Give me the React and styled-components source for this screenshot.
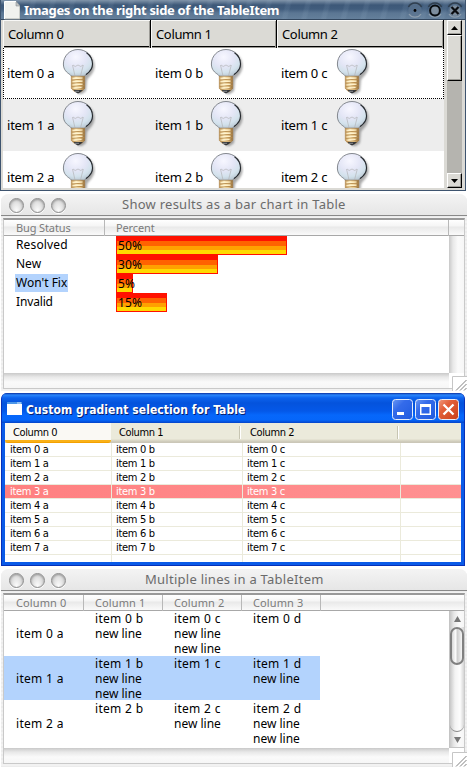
import React from 'react';
import styled, { createGlobalStyle } from 'styled-components';

const Global = createGlobalStyle`
  * { box-sizing: border-box; }
  body { margin: 0; background: #fff; overflow: hidden; }
`;

const Page = styled.main`
  width: 467px;
  height: 767px;
  overflow: hidden;
  display: flex;
  flex-direction: column;
  color: #000;
  white-space: nowrap;
  font-family: 'Noto Sans', sans-serif;
`;

/* ---------- GTK window ---------- */

const GtkWindow = styled.section`
  width: 466px;
  height: 191px;
  flex: none;
  display: flex;
  flex-direction: column;
  border: solid #3e546f;
  border-width: 0 1px 1px;
  background: #dbdad5;
`;

const GtkTitle = styled.header`
  height: 20px;
  flex: none;
  display: flex;
  align-items: center;
  padding: 0 2px 0 3px;
  color: #fff;
  border-bottom: 1px solid #33475f;
  background:
    repeating-linear-gradient(105deg, transparent 0 9px, rgba(160, 185, 210, 0.1) 11px 14px, transparent 16px 19px),
    linear-gradient(#8195aa 0, #3d5878 5px, #405c7c 9px, #5b7693 13px, #647f9b 100%);
`;

const GtkCaption = styled.h1`
  flex: 1;
  margin: 0;
  padding-left: 4px;
  font: bold 13px/20px 'Noto Sans', sans-serif;
  letter-spacing: -0.33px;
`;

const GtkButtons = styled.div`
  display: flex;
  gap: 4px;
`;

const GtkMain = styled.div`
  flex: 1;
  min-height: 0;
  display: flex;
  padding: 0 3px 2px 2px;
`;

const GtkTable = styled.div`
  width: 441px;
  margin-right: 3px;
  overflow: hidden;
  background: #fff;
`;

const gtkColumns = '148px 126px 167px';

const GtkHeader = styled.div`
  height: 27px;
  display: grid;
  grid-template-columns: ${gtkColumns};
  border-bottom: 1px solid #000;
  background: #dbdad5;
`;

const GtkHeaderCell = styled.div`
  padding-left: 5px;
  font-size: 13px;
  line-height: 28px;
  letter-spacing: -0.35px;
  border-right: 1px solid #000;
  box-shadow: inset 1px 1px #f8f8f6, inset -1px -1px #9c9b96;
`;

const GtkRow = styled.div`
  height: 52px;
  display: grid;
  grid-template-columns: ${gtkColumns};
  border: 1px ${p => (p.$focused ? 'dotted #000' : 'solid transparent')};
  background: ${p => (p.$shaded ? '#ededed' : '#fff')};
`;

const GtkCell = styled.div`
  display: flex;
  font-size: 13px;
  line-height: 51px;
  padding-left: 3px;
`;

const GtkLabel = styled.span`
  width: 55px;
  letter-spacing: -0.22px;
`;

const GtkScroll = styled.div`
  width: 15px;
  display: flex;
  flex-direction: column;
  background: #b5b4af;
`;

const GtkRaised = styled.div`
  height: ${p => p.$h}px;
  display: grid;
  place-items: center;
  background: #dbdad5;
  border: solid;
  border-width: 1px;
  border-color: #fff #000 #000 #fff;
  box-shadow: inset -1px -1px #a09f9a;
`;

const Spacer = styled.div`
  flex: 1;
`;

const BulbSvg = styled.svg`
  width: 34px;
  height: 48px;
  flex: none;
`;

const Bulb = () => (
  <BulbSvg viewBox="0 0 34 48">
    <defs>
      <radialGradient id="glass" cx="42%" cy="28%" r="72%">
        <stop offset="0" stopColor="#f7f7ff" />
        <stop offset=".5" stopColor="#e4e6f6" />
        <stop offset=".8" stopColor="#d3e2ec" />
        <stop offset="1" stopColor="#bdcbd6" />
      </radialGradient>
      <linearGradient id="brass">
        <stop offset="0" stopColor="#c79d5e" />
        <stop offset=".35" stopColor="#fff0c4" />
        <stop offset=".65" stopColor="#ecca8c" />
        <stop offset="1" stopColor="#8a6531" />
      </linearGradient>
      <filter id="soft" x="-20%" y="-20%" width="150%" height="150%">
        <feGaussianBlur stdDeviation="1.1" />
      </filter>
    </defs>
    <path d="M18 3.500a14.500 14.500 0 0 1 14.500 14.500c0 7-5 10-7.500 14l-1 11-4 3h-4V4z" fill="#555" opacity=".5" filter="url(#soft)" />
    <path d="M16 1.500C7.700 1.500 1.400 8 1.400 16c0 6 3.600 8.500 6.400 10.500 1 .7 1.400 1.200 1.400 1.800h13.400c0-.6.5-1.100 1.500-1.800 3-2 6.500-4.500 6.500-10.500C30.600 8 24.300 1.500 16 1.500z" fill="url(#glass)" stroke="#777c82" strokeWidth=".9" />
    <path d="M24.500 4.700c3.800 2.600 6 6.700 6 11.300 0 6-3.600 8.500-6.400 10.500" fill="none" stroke="#25292d" strokeWidth="1.100" />
    <path d="M13 28L10.500 17M18.500 28l2.800-11M11 17l2.200 1.500 2.800-1.500 2.800 1.500 2.200-1.500" fill="none" stroke="#b3b4b8" strokeWidth=".7" />
    <path d="M9.300 28.300h13.400v12l-2.700 3h-8l-2.700-3z" fill="url(#brass)" stroke="#a98047" strokeWidth=".6" />
    <path d="M9.500 32l13-1M9.500 35.200l13-1M9.500 38.400l13-1M10.500 41.500l11-1" stroke="#b58a4c" strokeWidth=".9" />
    <path d="M10.500 30.700l10-.7M10.500 33.800l10-.7M10.500 37l10-.7M11.500 40.200l8-.7" stroke="#fff3cf" strokeWidth="1.100" />
    <path d="M11.500 42h9.500l-2.500 2.200-2.500 1.300-2.500-1.300z" fill="#35373a" />
    <path d="M13 43.300h4" stroke="#9da0a3" strokeWidth=".8" />
  </BulbSvg>
);

const Glyph = styled.svg`
  display: block;
  flex: none;
`;

const PageIcon = () => (
  <Glyph width="16" height="20" viewBox="0 0 16 20">
    <path d="M.5 1.500h11.500l4 4v13.500H.5z" fill="#f1f1ee" />
    <path d="M12 1.500v4.500h4z" fill="#c4c5c3" stroke="#777e85" strokeWidth=".5" />
    <path d="M.5 19h15.500V6" fill="none" stroke="#a6aaa9" />
    <path d="M.5 19V1.500H12" fill="none" stroke="#fff" />
  </Glyph>
);

const GtkButton = ({ kind }) => (
  <Glyph width="16" height="17" viewBox="0 0 16 17">
    <circle cx="8" cy="9" r="6.800" fill="#5d7590" opacity=".7" />
    <path d="M1.500 6a7.200 7.200 0 0 1 13 0" fill="none" stroke="#2f3e4e" strokeWidth="1.500" />
    <path d="M2 13a7.200 7.200 0 0 0 12 0" fill="none" stroke="#8d9dad" strokeWidth="1.300" />
    {kind === 'min' && <circle cx="8" cy="9.500" r="1.400" fill="#000" />}
    {kind === 'max' && <circle cx="8" cy="9.500" r="4.900" fill="#7d8d9d" stroke="#080b0e" strokeWidth="2" />}
    {kind === 'close' && (
      <>
        <circle cx="8" cy="9.500" r="5.300" fill="#7d8d9d" />
        <path d="M4.500 6l7 7M11.500 6l-7 7" stroke="#0a0c10" strokeWidth="2.200" />
      </>
    )}
  </Glyph>
);

const Arrow = ({ down, width = 7, height = 4, color = '#000' }) => (
  <Glyph width={width} height={height} viewBox="0 0 8 4" preserveAspectRatio="none">
    <path d={down ? 'M0 0h8L4 4z' : 'M0 4h8L4 0z'} fill={color} />
  </Glyph>
);

/* ---------- Aqua windows ---------- */

const MacWindow = styled.section`
  width: 466px;
  height: ${p => p.$h}px;
  margin: 3px 0 0 1px;
  flex: none;
  position: relative;
  border-radius: 7px 7px 0 0;
  border-top: 1px solid #f3f3f3;
  background: repeating-linear-gradient(#ececec 0 2px, #f2f2f2 2px 4px);
  overflow: hidden;
`;

const MacTitle = styled.header`
  height: 21px;
  display: flex;
  align-items: center;
  padding-left: 8px;
  border-bottom: 1px solid #898989;
  background: linear-gradient(#f3f3f3, #e6e6e6);
`;

const Lights = styled.div`
  display: flex;
  gap: 6px;
`;

const Light = styled.i`
  width: 15px;
  height: 15px;
  border-radius: 50%;
  border: 1px solid #8c8c8c;
  background: radial-gradient(ellipse at 50% 100%, #fff 0, #e6e6e6 45%, #c2c2c2 100%);
  box-shadow: inset 0 1px 2px #999, 0 1px #fff;
`;

const MacCaption = styled.h1`
  margin: -2px 0 0 ${p => p.$left}px;
  font: 400 13px/20px 'Noto Sans', sans-serif;
  letter-spacing: 0.26px;
  color: #6b6b6b;
`;

const MacFrame = styled.div`
  margin: 2px 0 0 2px;
  width: 462px;
  border: 1px solid #c9c9c9;
  border-top: 2px solid #999;
  background: #fff;
`;

const MacHeader = styled.div`
  height: 16px;
  display: grid;
  grid-template-columns: ${p => p.$columns};
  border-bottom: 1px solid #a8a8a8;
  background: linear-gradient(#fff 0, #f5f5f5 6px, #e9e9e9 7px, #fafafa 15px);
`;

const MacHeaderCell = styled.div`
  padding-left: ${p => (p.$wide ? 11 : 12)}px;
  border-right: ${p => (p.$last ? 0 : 1)}px solid #b8b8b8;
  font-size: 11px;
  line-height: 16px;
  letter-spacing: ${p => (p.$tight ? -0.12 : 0.1)}px;
  color: #7b7b7b;
`;

const MacContent = styled.div`
  display: flex;
  height: 137px;
`;

const MacRows = styled.div`
  width: 445px;
  overflow: hidden;
`;

const MacTrack = styled.div`
  width: 15px;
  background: linear-gradient(90deg, #c8c8c8, #e8e8e8 4px, #fafafa 9px, #f6f6f6);
`;

const MacHTrack = styled.div`
  height: 15px;
  width: 445px;
  background: linear-gradient(#c9c9c9, #e8e8e8 4px, #fafafa 9px, #f6f6f6);
`;

const Grip = styled.svg`
  position: absolute;
  right: 0;
  bottom: 0;
  width: 15px;
  height: 15px;
`;

const ResizeGrip = () => (
  <Grip viewBox="0 0 15 15">
    <path d="M0 0h15v15H0z" fill="#fff" />
    <path d="M.5 15V.5H15" fill="none" stroke="#c6c6c6" />
    <path d="M4 14.500L14.500 4M8 14.500L14.500 8M12 14.500l2.500-2.500" stroke="#808080" />
  </Grip>
);

const BugRow = styled.div`
  height: 19px;
  display: flex;
`;

const BugName = styled.div`
  width: 112px;
  padding-left: 11px;
  display: flex;
  align-items: flex-start;
`;

const BugLabel = styled.span`
  height: 18px;
  padding: 0 1px;
  font-size: 12px;
  line-height: 18px;
  letter-spacing: ${p => p.$track}px;
  background: ${p => (p.$selected ? '#b3d3fd' : 'transparent')};
`;

const Bar = styled.div`
  height: 19px;
  padding-left: 2px;
  font-size: 12px;
  line-height: 19px;
  letter-spacing: 0.1px;
  border: solid #f10;
  border-width: 0 0 1px;
  box-shadow: inset 1px 0 #f10, inset -1px 0 #f10;
  background: linear-gradient(#f10 0 5px, #ff6200 5px 10px, #ffa100 10px 14px, #ffd900 14px);
`;

const MultiRow = styled.div`
  width: ${p => (p.$selected ? 316 : 445)}px;
  height: ${p => (p.$selected ? 44 : 45)}px;
  margin-bottom: ${p => (p.$selected ? 1 : 0)}px;
  display: grid;
  grid-template-columns: 79px 79px 79px 79px;
  background: ${p => (p.$selected ? '#b3d3fd' : '#fff')};
`;

const MultiCell = styled.div`
  display: flex;
  flex-direction: column;
  justify-content: ${p => (p.$middle ? 'center' : 'flex-start')};
  height: 45px;
  padding-left: 12px;
  font-size: 12px;
  line-height: 15px;
`;

const Line = styled.span`
  letter-spacing: ${p => (p.$item ? 0.3 : 0)}px;
`;

const AquaScroll = styled(MacTrack)`
  display: flex;
  flex-direction: column;
  align-items: center;
  border: 1px solid #c4c4c4;
  border-width: 0 0 1px 1px;
  padding: 5px 0 4px;
`;

const AquaTrough = styled.div`
  width: 14px;
  height: 105px;
  margin: 5px 0 5px;
  flex: none;
  border-radius: 0 0 7px 7px;
  border-bottom: 1px solid #888;
  background: linear-gradient(90deg, #c8c8c8, #f3f3f3 5px, #fdfdfd 10px, #d5d5d5);
`;

const AquaThumb = styled.div`
  width: 14px;
  height: 38px;
  border-radius: 7px;
  border: 2px solid #808080;
  background: linear-gradient(90deg, #d8d8d8, #fff 4px, #ccc 5px, #f4f4f4 10px);
`;

/* ---------- XP window ---------- */

const XpWindow = styled.section`
  width: 464px;
  height: 173px;
  margin: 2px 0 0 1px;
  flex: none;
  border-radius: 6px 6px 0 0;
  border: solid #0831b8;
  border-width: 0 1px 1px;
  overflow: hidden;
  background: #0a5be8;
  font-family: 'DejaVu Sans Condensed', 'DejaVu Sans', sans-serif;
`;

const XpTitle = styled.header`
  height: 30px;
  display: flex;
  align-items: center;
  padding: 2px 5px 0 5px;
  color: #fff;
  background: linear-gradient(#0a2fa0 0, #2a86fb 2px, #0c62ec 5px, #0453dc 10px, #0458e8 18px, #0667fb 22px, #0566fa 27px, #0544c8 30px);
`;

const XpCaption = styled.h1`
  flex: 1;
  margin: 2px 0 0;
  padding-left: 4px;
  font: bold 12px/20px 'DejaVu Sans Condensed', 'DejaVu Sans', sans-serif;
  letter-spacing: 0.06px;
  text-shadow: 1px 1px #062070;
`;

const XpButtons = styled.div`
  display: flex;
  gap: 2px;
`;

const XpBody = styled.div`
  height: 139px;
  margin: 0 3px;
  overflow: hidden;
  background: #fff;
`;

const XpHeader = styled.div`
  height: 20px;
  display: grid;
  grid-template-columns: 106px 130px 158px 62px;
  background: linear-gradient(#ebeadb 16px, #dddac9 17px, #cbc7b8 19px);
`;

const XpHeaderCell = styled.div`
  height: 20px;
  padding-left: ${p => p.$indent || 8}px;
  font-size: 11px;
  line-height: 20px;
  letter-spacing: -0.4px;
  color: #000;
  background: ${p =>
    p.$hot
      ? 'linear-gradient(#faf9f4 17px, #f9b119 17px 19px, #f4a100 19px)'
      : p.$divided
        ? 'linear-gradient(#c7c5b2, #c7c5b2) right 1px top 3px / 1px 13px no-repeat, linear-gradient(#fff, #fff) right 0 top 3px / 1px 13px no-repeat'
        : 'none'};
  border-radius: ${p => (p.$hot ? '0 0 3px 3px' : 0)};
`;

const XpRow = styled.div`
  height: 14px;
  display: grid;
  grid-template-columns: 107px 131px 158px 60px;
  color: ${p => (p.$selected ? '#fff' : '#000')};
  background: ${p => (p.$selected ? 'linear-gradient(90deg, #ff8080, #ff9191)' : '#fff')};
  border-bottom: 1px solid #ebeadb;
`;

const XpCell = styled.div`
  padding-left: ${p => (p.$first ? 5 : 4)}px;
  font-size: 11px;
  line-height: 14px;
  letter-spacing: -0.32px;
  border-right: ${p => (p.$last ? 0 : 1)}px solid #ebeadb;
`;

const XpAppIcon = () => (
  <Glyph width="15" height="14" viewBox="0 0 15 14">
    <path d="M0 0h15v13H0z" fill="#fff" />
    <path d="M0 0h15v2H0z" fill="#4c96e8" />
    <path d="M10 .500h4v1h-4z" fill="#d6e7fa" />
  </Glyph>
);

const XpButton = ({ kind }) => (
  <Glyph width="21" height="21" viewBox="0 0 21 21">
    <defs>
      <linearGradient id={`xp-${kind}`} x2="1" y2="1">
        <stop offset="0" stopColor={kind === 'close' ? '#f09a7e' : '#6c98f2'} />
        <stop offset=".35" stopColor={kind === 'close' ? '#e3603a' : '#346bea'} />
        <stop offset="1" stopColor={kind === 'close' ? '#c8401a' : '#1f5adf'} />
      </linearGradient>
    </defs>
    <rect x=".5" y=".5" width="20" height="20" rx="3" fill={`url(#xp-${kind})`} stroke="#e5edfb" />
    {kind === 'min' && <path d="M5 13h7v3H5z" fill="#fff" />}
    {kind === 'max' && <path d="M5 5h11v11H5zM6.500 8v6.500h8V8z" fill="#fff" fillRule="evenodd" />}
    {kind === 'close' && <path d="M5.500 5.500l10 10M15.500 5.500l-10 10" stroke="#fff" strokeWidth="2.300" />}
  </Glyph>
);

/* ---------- Windows with their data ---------- */

const LETTERS = ['a', 'b', 'c'];

const ImagesTable = () => (
  <GtkWindow>
    <GtkTitle>
      <PageIcon />
      <GtkCaption>Images on the right side of the TableItem</GtkCaption>
      <GtkButtons>
        <GtkButton kind="min" />
        <GtkButton kind="max" />
        <GtkButton kind="close" />
      </GtkButtons>
    </GtkTitle>
    <GtkMain>
      <GtkTable>
        <GtkHeader>
          {[0, 1, 2].map(n => <GtkHeaderCell key={n}>Column {n}</GtkHeaderCell>)}
        </GtkHeader>
        {[0, 1, 2].map(n => (
          <GtkRow key={n} $focused={n === 0} $shaded={n === 1}>
            {LETTERS.map(l => (
              <GtkCell key={l}>
                <GtkLabel>item {n} {l}</GtkLabel>
                <Bulb />
              </GtkCell>
            ))}
          </GtkRow>
        ))}
      </GtkTable>
      <GtkScroll>
        <GtkRaised $h={15}><Arrow /></GtkRaised>
        <GtkRaised $h={46} />
        <Spacer />
        <GtkRaised $h={15}><Arrow down /></GtkRaised>
      </GtkScroll>
    </GtkMain>
  </GtkWindow>
);

const BUGS = [
  { name: 'Resolved', percent: 50, width: 171, track: 0.15 },
  { name: 'New', percent: 30, width: 102, track: 0 },
  { name: "Won't Fix", percent: 5, width: 17, track: 0, selected: true },
  { name: 'Invalid', percent: 15, width: 51, track: -0.15 },
];

const MacLights = () => (
  <Lights>
    <Light />
    <Light />
    <Light />
  </Lights>
);

const BarChartTable = () => (
  <MacWindow $h={197}>
    <MacTitle>
      <MacLights />
      <MacCaption $left={56}>Show results as a bar chart in Table</MacCaption>
    </MacTitle>
    <MacFrame>
      <MacHeader $columns="101px 344px 15px">
        <MacHeaderCell $tight>Bug Status</MacHeaderCell>
        <MacHeaderCell $wide $tight>Percent</MacHeaderCell>
        <MacHeaderCell $last />
      </MacHeader>
      <MacContent>
        <MacRows>
          {BUGS.map(b => (
            <BugRow key={b.name}>
              <BugName>
                <BugLabel $selected={b.selected} $track={b.track}>{b.name}</BugLabel>
              </BugName>
              <Bar style={{ width: b.width }}>{b.percent}%</Bar>
            </BugRow>
          ))}
        </MacRows>
        <MacTrack />
      </MacContent>
      <MacHTrack />
    </MacFrame>
    <ResizeGrip />
  </MacWindow>
);

const GradientTable = () => (
  <XpWindow>
    <XpTitle>
      <XpAppIcon />
      <XpCaption>Custom gradient selection for Table</XpCaption>
      <XpButtons>
        <XpButton kind="min" />
        <XpButton kind="max" />
        <XpButton kind="close" />
      </XpButtons>
    </XpTitle>
    <XpBody>
      <XpHeader>
        <XpHeaderCell $hot>Column 0</XpHeaderCell>
        <XpHeaderCell $divided>Column 1</XpHeaderCell>
        <XpHeaderCell $divided $indent={9}>Column 2</XpHeaderCell>
        <XpHeaderCell />
      </XpHeader>
      {[0, 1, 2, 3, 4, 5, 6, 7].map(n => (
        <XpRow key={n} $selected={n === 3}>
          {LETTERS.map(l => <XpCell key={l} $first={l === 'a'}>item {n} {l}</XpCell>)}
          <XpCell $last />
        </XpRow>
      ))}
      <XpRow>
        <XpCell />
        <XpCell />
        <XpCell />
        <XpCell $last />
      </XpRow>
    </XpBody>
  </XpWindow>
);

const MULTI = [
  [1, 2, 3, 1],
  [1, 3, 1, 2],
  [1, 1, 2, 3],
];

const MultiLineTable = () => (
  <MacWindow $h={198}>
    <MacTitle>
      <MacLights />
      <MacCaption $left={79}>Multiple lines in a TableItem</MacCaption>
    </MacTitle>
    <MacFrame>
      <MacHeader $columns="80px 79px 79px 79px 1fr">
        {[0, 1, 2, 3].map(n => <MacHeaderCell key={n} $wide={n > 0}>Column {n}</MacHeaderCell>)}
        <MacHeaderCell $last />
      </MacHeader>
      <MacContent>
        <MacRows>
          {MULTI.map((counts, n) => (
            <MultiRow key={n} $selected={n === 1}>
              {counts.map((count, c) => (
                <MultiCell key={c} $middle={c === 0}>
                  <Line $item>item {n} {'abcd'[c]}</Line>
                  {Array.from({ length: count - 1 }, (_, i) => <Line key={i}>new line</Line>)}
                </MultiCell>
              ))}
            </MultiRow>
          ))}
        </MacRows>
        <AquaScroll>
          <Arrow width={7} height={6} color="#777" />
          <AquaTrough>
            <AquaThumb />
          </AquaTrough>
          <Arrow down width={7} height={6} color="#777" />
        </AquaScroll>
      </MacContent>
      <MacHTrack />
    </MacFrame>
    <ResizeGrip />
  </MacWindow>
);

export default function App() {
  return (
    <Page>
      <Global />
      <ImagesTable />
      <BarChartTable />
      <GradientTable />
      <MultiLineTable />
    </Page>
  );
}
